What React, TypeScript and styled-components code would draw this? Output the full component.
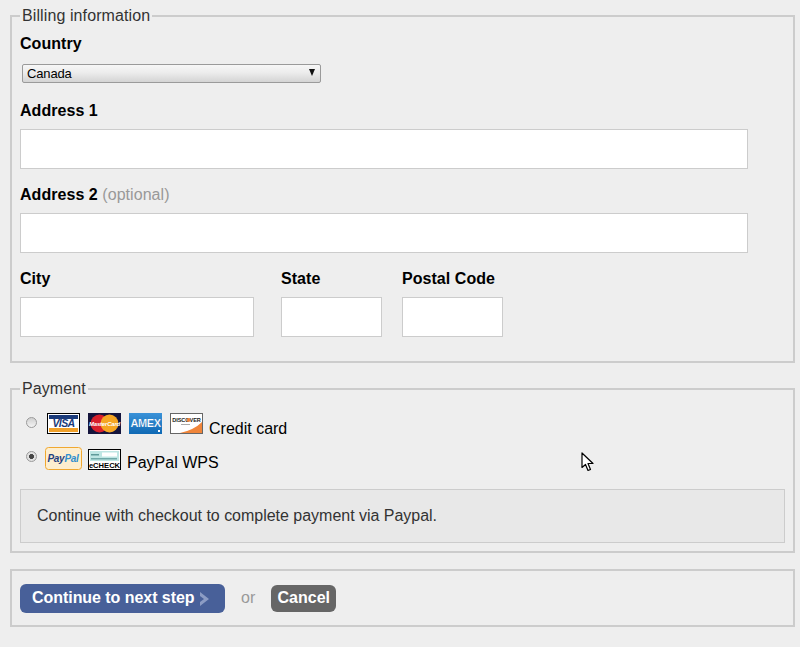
import styled, { createGlobalStyle } from "styled-components";

const GlobalStyle = createGlobalStyle`
  html, body {
    margin: 0;
    padding: 0;
    background: #eeeeee;
    font-family: "Liberation Sans", Arial, sans-serif;
    font-size: 16px;
    color: #000;
  }
`;

const Page = styled.form`
  position: relative;
  width: 800px;
  height: 647px;
  box-sizing: border-box;
  padding: 7px 5px 0 10px;
  overflow: hidden;
`;

const Fieldset = styled.fieldset<{ $gap?: number; $pad?: string }>`
  margin: 0 0 ${(p) => p.$gap ?? 0}px;
  min-width: 0;
  padding: ${(p) => p.$pad ?? "0 8px"};
  border: 2px solid #cccccc;
`;

const Legend = styled.legend`
  padding: 0 2px;
  margin-left: 0;
  font-size: 16px;
  line-height: 18px;
  letter-spacing: 0.1px;
  color: #333;
`;

const Field = styled.div<{ $width?: number; $mb?: number }>`
  width: ${(p) => (p.$width ? `${p.$width}px` : "auto")};
  margin-bottom: ${(p) => p.$mb ?? 15}px;
`;

const Label = styled.label<{ $mb?: number }>`
  display: block;
  height: 20px;
  line-height: 22px;
  margin-bottom: ${(p) => p.$mb ?? 9}px;
  font-weight: bold;
  font-size: 16px;
  letter-spacing: 0.05px;
`;

const Optional = styled.span`
  font-weight: normal;
  color: #999;
`;

const TextInput = styled.input`
  display: block;
  box-sizing: border-box;
  width: ${(p) => p.width ?? 728}px;
  height: 40px;
  padding: 4px 8px;
  border: 1px solid #cccccc;
  background: #fff;
  font: 16px "Liberation Sans", Arial, sans-serif;
  outline: none;
`;

const SelectWrap = styled.div`
  position: relative;
  width: 299px;
  height: 19px;
  margin-left: 2px;
`;

const Select = styled.select`
  appearance: none;
  display: block;
  box-sizing: border-box;
  width: 100%;
  height: 100%;
  padding: 0 0 0 4px;
  border: 1px solid #9a9a9a;
  border-radius: 2px;
  background: linear-gradient(#f7f7f7, #ececec 45%, #d4d4d4);
  color: #000;
  font: 13px "Liberation Sans", Arial, sans-serif;
  letter-spacing: -0.15px;
  outline: none;
`;

const SelectArrow = styled.span`
  position: absolute;
  top: 5px;
  right: 6px;
  width: 0;
  height: 0;
  border-left: 3.5px solid transparent;
  border-right: 3.5px solid transparent;
  border-top: 7px solid #111;
  pointer-events: none;
`;

const CityRow = styled.div`
  display: flex;
  gap: 0;
  margin-bottom: 24px;
`;

const PaymentRow = styled.div<{ $mb?: number }>`
  display: flex;
  align-items: flex-start;
  height: 23px;
  margin-bottom: ${(p) => p.$mb ?? 0}px;
`;

const Radio = styled.input`
  appearance: none;
  flex: none;
  box-sizing: border-box;
  width: 11px;
  height: 11px;
  margin: 4px 0 0 6px;
  border: 1px solid #9a9a9a;
  border-radius: 50%;
  background: linear-gradient(#d0d0d0, #f4f4f4);
  &:checked {
    background: radial-gradient(circle, #444 0 2.2px, #e0e0e0 2.8px);
  }
`;

const Cards = styled.div<{ $ml: number; $gap: number }>`
  display: flex;
  align-items: flex-start;
  gap: ${(p) => p.$gap}px;
  margin-left: ${(p) => p.$ml}px;
`;

const CardSvg = styled.svg<{ $top?: number }>`
  display: block;
  flex: none;
  margin-top: ${(p) => p.$top ?? 0}px;
`;

const PayName = styled.span`
  margin-left: 6px;
  margin-top: 7px;
  line-height: 18px;
  font-size: 16px;
`;

const Message = styled.div`
  box-sizing: border-box;
  width: 765px;
  height: 54px;
  padding: 0 16px;
  border: 1px solid #cccccc;
  background: #e8e8e8;
  color: #333;
  font-size: 16px;
  line-height: 52px;
  letter-spacing: -0.02px;
  margin-bottom: 8px;
`;

const Actions = styled.div`
  display: flex;
  align-items: center;
  height: 54px;
`;

const NextButton = styled.button`
  display: flex;
  align-items: center;
  box-sizing: border-box;
  width: 205px;
  height: 29px;
  padding: 0 0 0 12px;
  border: 0;
  border-radius: 6px;
  background: #486099;
  color: #fff;
  font: bold 16px "Liberation Sans", Arial, sans-serif;
  letter-spacing: -0.05px;
`;

const Chevron = styled.svg`
  display: block;
  margin: 2px 0 0 4px;
`;

const Or = styled.span`
  margin: 0 16px;
  color: #999;
  font-size: 16px;
`;

const CancelButton = styled.button`
  box-sizing: border-box;
  width: 65px;
  height: 27px;
  padding: 0;
  border: 0;
  border-radius: 6px;
  background: #666666;
  color: #fff;
  font: bold 16px "Liberation Sans", Arial, sans-serif;
`;

const Cursor = styled.svg`
  position: absolute;
  left: 581px;
  top: 452px;
`;

const VisaCard = () => (
  <CardSvg width="33" height="21" viewBox="0 0 33 21">
    <rect width="33" height="21" fill="#000" />
    <rect x="1" y="1" width="31" height="19" fill="#fff" />
    <rect x="2" y="2" width="29" height="4" fill="#1a3a7a" />
    <rect x="2" y="15" width="29" height="4" fill="#f0a028" />
    <text x="16.5" y="14.3" textAnchor="middle" fontFamily="Liberation Sans" fontSize="10.5" fontWeight="bold" fontStyle="italic" letterSpacing="-0.6" fill="#1a3a7a">VISA</text>
  </CardSvg>
);

const MasterCard = () => (
  <CardSvg width="33" height="21" viewBox="0 0 33 21">
    <rect width="33" height="21" fill="#14143c" />
    <circle cx="11.5" cy="10.5" r="9" fill="#d8202c" />
    <circle cx="21.5" cy="10.5" r="9" fill="#f5a623" />
    <text x="16.5" y="12.5" textAnchor="middle" fontFamily="Liberation Sans" fontSize="6" fontWeight="bold" fontStyle="italic" letterSpacing="-0.2" fill="#fff">MasterCard</text>
  </CardSvg>
);

const AmexCard = () => (
  <CardSvg width="33" height="21" viewBox="0 0 33 21">
    <defs>
      <linearGradient id="amexBg" x1="0" y1="0" x2="0" y2="1">
        <stop offset="0" stopColor="#3a92d8" />
        <stop offset="1" stopColor="#0f69b4" />
      </linearGradient>
    </defs>
    <rect width="33" height="21" fill="url(#amexBg)" />
    <text x="16.5" y="14" textAnchor="middle" fontFamily="Liberation Sans" fontSize="11" fontWeight="bold" letterSpacing="-0.4" fill="#fff" stroke="#0f69b4" strokeWidth="0.2">AMEX</text>
    <rect x="29" y="17" width="2" height="2" fill="#fff" />
  </CardSvg>
);

const DiscoverCard = () => (
  <CardSvg width="33" height="21" viewBox="0 0 33 21">
    <rect x="0.5" y="0.5" width="32" height="20" fill="#fff" stroke="#666" />
    <path d="M10 20 Q24 17 32 9 V20 Z" fill="#f0853a" />
    <text x="16.5" y="9" textAnchor="middle" fontFamily="Liberation Sans" fontSize="5.6" fontWeight="bold" letterSpacing="-0.1" fill="#222">DISCOVER</text>
    <circle cx="18.6" cy="7" r="1.9" fill="#f0853a" />
    <rect x="11" y="11" width="9" height="1" fill="#aaa" />
  </CardSvg>
);

const PaypalCard = () => (
  <CardSvg width="37" height="23" viewBox="0 0 37 23">
    <rect x="0.5" y="0.5" width="36" height="22" rx="3" fill="#fdeecf" stroke="#f0a830" />
    <text x="18" y="15" textAnchor="middle" fontFamily="Liberation Sans" fontSize="10" fontWeight="bold" fontStyle="italic" letterSpacing="-0.3" fill="#1f3f7f">
      Pay<tspan fill="#2f8fd0">Pal</tspan>
    </text>
  </CardSvg>
);

const EcheckCard = () => (
  <CardSvg width="33" height="21" viewBox="0 0 33 21" $top={2}>
    <rect width="33" height="21" fill="#000" />
    <rect x="1" y="1" width="31" height="19" fill="#fff" />
    <rect x="2" y="2" width="29" height="10" fill="#bfe6e4" />
    <rect x="14" y="3.5" width="15" height="4" fill="#fff" />
    <rect x="3" y="5" width="8" height="1.5" fill="#5f9a9a" />
    <rect x="3" y="9" width="26" height="1.5" fill="#6fa8a8" />
    <text x="16.5" y="18.7" textAnchor="middle" fontFamily="Liberation Sans" fontSize="7.6" fontWeight="bold" fill="#000">eCHECK</text>
  </CardSvg>
);

const App = () => {
  return (
    <Page onSubmit={(e) => e.preventDefault()}>
      <GlobalStyle />

      <Fieldset $gap={17} $pad="8px 8px 0">
        <Legend>Billing information</Legend>
        <Field $mb={17}>
          <Label $mb={11}>Country</Label>
          <SelectWrap>
            <Select defaultValue="Canada">
              <option>Canada</option>
            </Select>
            <SelectArrow />
          </SelectWrap>
        </Field>
        <Field>
          <Label>Address 1</Label>
          <TextInput />
        </Field>
        <Field>
          <Label>
            Address 2 <Optional>(optional)</Optional>
          </Label>
          <TextInput />
        </Field>
        <CityRow>
          <Field $width={261} $mb={0}>
            <Label>City</Label>
            <TextInput width={234} />
          </Field>
          <Field $width={121} $mb={0}>
            <Label>State</Label>
            <TextInput width={101} />
          </Field>
          <Field $mb={0}>
            <Label>Postal Code</Label>
            <TextInput width={101} />
          </Field>
        </CityRow>
      </Fieldset>

      <Fieldset $gap={16} $pad="15px 8px 0">
        <Legend>Payment</Legend>
        <PaymentRow $mb={11}>
          <Radio type="radio" name="pay" />
          <Cards $ml={10} $gap={8}>
            <VisaCard />
            <MasterCard />
            <AmexCard />
            <DiscoverCard />
          </Cards>
          <PayName>Credit card</PayName>
        </PaymentRow>
        <PaymentRow $mb={19}>
          <Radio type="radio" name="pay" defaultChecked />
          <Cards $ml={8} $gap={6}>
            <PaypalCard />
            <EcheckCard />
          </Cards>
          <PayName>PayPal WPS</PayName>
        </PaymentRow>
        <Message>Continue with checkout to complete payment via Paypal.</Message>
      </Fieldset>

      <Fieldset $pad="0 8px">
        <Actions>
          <NextButton type="button">
            Continue to next step
            <Chevron width="11" height="16" viewBox="0 0 11 16">
              <path d="M1 1 L10 8 L1 15 L1 11 L5 8 L1 5 Z" fill="#8c9cc4" />
            </Chevron>
          </NextButton>
          <Or>or</Or>
          <CancelButton type="button">Cancel</CancelButton>
        </Actions>
      </Fieldset>

      <Cursor width="14" height="21" viewBox="0 0 14 21">
        <path d="M1 1 L1 15.5 L4.5 12.5 L7 18.5 L9.5 17.5 L7 11.5 L12 11.5 Z" fill="#fff" stroke="#000" strokeWidth="1.2" strokeLinejoin="round" />
      </Cursor>
    </Page>
  );
};

export default App;
